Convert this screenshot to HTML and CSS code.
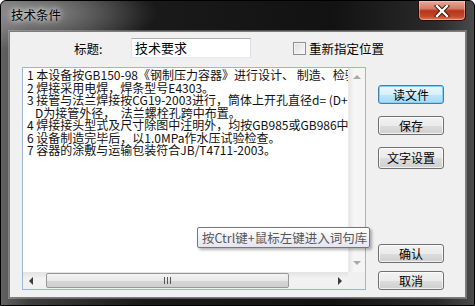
FILE: index.html
```html
<!DOCTYPE html>
<html>

<head>
    <link rel="stylesheet" href="styles.css">
</head>

<body>

    <div class="window">
        <div class="titlebar">
            <span class="title">技术条件</span>
            <div class="close-btn">
                <svg width="16" height="12" viewBox="0 0 16 12">
                    <path d="M3 1 L13 11 M13 1 L3 11" stroke="#3a1208" stroke-width="4.2" stroke-linecap="square" />
                    <path d="M3 1 L13 11 M13 1 L3 11" stroke="#fff" stroke-width="2.4" stroke-linecap="square" />
                </svg>
            </div>
        </div>

        <div class="client">
            <div class="header">
                <span class="label">标题:</span>
                <div class="textbox">技术要求</div>
                <span class="checkbox"></span>
                <span class="check-label">重新指定位置</span>
            </div>

            <div class="body">
                <div class="editor">
                    <div class="content">1 本设备按GB150-98《钢制压力容器》进行设计、 制造、检验
2 焊接采用电焊，焊条型号E4303。
3 接管与法兰焊接按CG19-2003进行，筒体上开孔直径d= (D+1^
   D为接管外径，  法兰螺栓孔跨中布置。
4 焊接接头型式及尺寸除图中注明外，均按GB985或GB986中规
6 设备制造完毕后，以1.0MPa作水压试验检查。
7 容器的涂敷与运输包装符合JB/T4711-2003。</div>
                    <div class="vscroll">
                        <span class="arrow up"></span>
                        <span class="arrow down"></span>
                    </div>
                    <div class="hscroll">
                        <span class="arrow left"></span>
                        <div class="thumb"><span class="grip"></span></div>
                        <span class="arrow right"></span>
                    </div>
                    <div class="corner"></div>
                </div>

                <div class="buttons">
                    <button class="btn default">读文件</button>
                    <button class="btn">保存</button>
                    <button class="btn tall">文字设置</button>
                    <button class="btn ok">确认</button>
                    <button class="btn">取消</button>
                </div>
            </div>

            <div class="tooltip">按Ctrl键+鼠标左键进入词句库</div>
        </div>
    </div>

</body>

</html>
```

FILE: styles.css
```css
body {
    margin: 0;
    background: #fff;
    font-family: "Noto Sans CJK SC", "Liberation Sans", sans-serif;
    font-size: 12px;
    color: #000;
}

.window {
    width: 475px;
    height: 306px;
    box-sizing: border-box;
    border: 1px solid #000;
    border-radius: 6px 6px 0 0;
    padding: 0 8px 7px 8px;
    display: flex;
    flex-direction: column;
    background:
        radial-gradient(ellipse 120px 38px at 36px 12px, rgba(190, 190, 190, 0.6), rgba(190, 190, 190, 0) 100%),
        linear-gradient(to right, #626262 0, #3e3e3e 6%, #1a1a1a 30%, #121212 70%, #2a2a2a 92%, #4a4a4a 100%);
}

.titlebar {
    height: 30px;
    display: flex;
    justify-content: space-between;
    align-items: flex-start;
}

.title {
    margin: 6px 0 0 2px;
    font-size: 12.5px;
    line-height: 16px;
    text-shadow: 0 0 5px rgba(255, 255, 255, 0.9), 0 0 9px rgba(255, 255, 255, 0.7);
}

.close-btn {
    width: 48px;
    height: 20px;
    box-sizing: border-box;
    border: 1px solid #2b0a04;
    border-top: none;
    border-radius: 0 0 5px 5px;
    display: flex;
    align-items: center;
    justify-content: center;
    background: linear-gradient(#e9a899 0, #d27c68 40%, #b8331a 52%, #c2482a 80%, #e07a58 100%);
    box-shadow: inset 0 0 0 1px rgba(255, 220, 200, 0.45);
}

.client {
    position: relative;
    flex: 1;
    background: #f0f0f0;
    border: 1px solid #7d7d7d;
    box-shadow: 0 0 0 1px rgba(255, 255, 255, 0.25);
    padding-left: 12px;
}

.header {
    display: flex;
    align-items: center;
    margin-top: 6px;
    height: 20px;
}

.label {
    width: 57px;
    margin-left: 52px;
    font-size: 12.5px;
}

.textbox {
    width: 120px;
    height: 20px;
    box-sizing: border-box;
    background: #fff;
    border: 1px solid #abadb3;
    border-color: #abadb3 #dbdfe6 #e3e9ef #e2e3ea;
    padding-left: 3px;
    font-size: 13px;
    line-height: 18px;
}

.checkbox {
    width: 13px;
    height: 13px;
    box-sizing: border-box;
    margin-left: 42px;
    border: 1px solid #8e8f8f;
    background: linear-gradient(135deg, #dcdcdc, #fbfbfb);
    box-shadow: inset 0 0 0 1px #f4f4f4;
}

.check-label {
    margin-left: 3px;
    font-size: 12.5px;
}

.body {
    display: flex;
    margin-top: 9px;
    height: 223px;
}

.editor {
    width: 344px;
    box-sizing: border-box;
    border: 1px solid #9fb6d0;
    display: grid;
    grid-template-columns: 1fr 17px;
    grid-template-rows: 1fr 17px;
    background: #fff;
}

.content {
    overflow: hidden;
    white-space: pre;
    padding: 1px 0 0 4px;
    line-height: 12.5px;
    font-size: 12px;
    color: #111;
}

.vscroll {
    background: linear-gradient(to right, #e6e6e6, #f6f6f6 30%, #f4f4f4);
    border-left: 1px solid #ececec;
    display: flex;
    flex-direction: column;
    justify-content: space-between;
    align-items: center;
    padding: 7px 0 7px;
}

.hscroll {
    grid-column: 1;
    background: linear-gradient(#e3e3e3, #f2f2f2 40%, #f0f0f0);
    display: flex;
    align-items: center;
}

.corner {
    background: #f0f0f0;
}

.arrow {
    width: 0;
    height: 0;
    border: 4px solid transparent;
}

.arrow.up {
    border-bottom-color: #a8a8a8;
    border-top-width: 0;
}

.arrow.down {
    border-top-color: #a8a8a8;
    border-bottom-width: 0;
}

.arrow.left {
    border-right-color: #3c3c3c;
    border-left-width: 0;
    margin: 0 6px 0 6px;
}

.arrow.right {
    border-left-color: #3c3c3c;
    border-right-width: 0;
    margin: 0 6px 0 auto;
}

.thumb {
    width: 243px;
    height: 15px;
    box-sizing: border-box;
    margin-left: 7px;
    border: 1px solid #979797;
    border-radius: 2px;
    background: linear-gradient(#f3f3f3, #e8e8e8 50%, #d6d6d6 51%, #cfcfcf);
    display: flex;
    align-items: center;
    justify-content: center;
}

.grip {
    width: 7px;
    height: 7px;
    background: repeating-linear-gradient(to right, #555 0, #555 1px, transparent 1px, transparent 3px);
}

.buttons {
    display: flex;
    flex-direction: column;
    margin-left: 12px;
    width: 66px;
}

.btn {
    height: 19px;
    margin-top: 12px;
    padding: 0;
    font-family: "Noto Sans CJK SC", sans-serif;
    font-size: 12px;
    line-height: 14px;
    color: #000;
    border: 1px solid #707070;
    border-radius: 3px;
    background: linear-gradient(#f2f2f2 0, #ebebeb 50%, #dddddd 51%, #cfcfcf 100%);
    box-shadow: inset 0 0 0 1px rgba(255, 255, 255, 0.7);
}

.btn.default {
    margin-top: 18px;
    border-color: #3c7fb1;
    background: linear-gradient(#eaf6fd 0, #d9f0fc 50%, #bee6fd 51%, #a7d9f5 100%);
    box-shadow: inset 0 0 0 1px #7ed3f7;
}

.btn.tall {
    height: 22px;
}

.btn.ok {
    margin-top: auto;
}

.btn.ok + .btn {
    margin-top: 8px;
}

.tooltip {
    position: absolute;
    left: 187px;
    top: 195px;
    width: 173px;
    height: 21px;
    box-sizing: border-box;
    border: 1px solid #767676;
    border-radius: 2px;
    background: linear-gradient(#ffffff, #e4e5f0);
    box-shadow: 2px 2px 3px rgba(0, 0, 0, 0.3);
    color: #575757;
    font-size: 12.5px;
    line-height: 19px;
    padding-left: 4px;
    white-space: nowrap;
}
```
